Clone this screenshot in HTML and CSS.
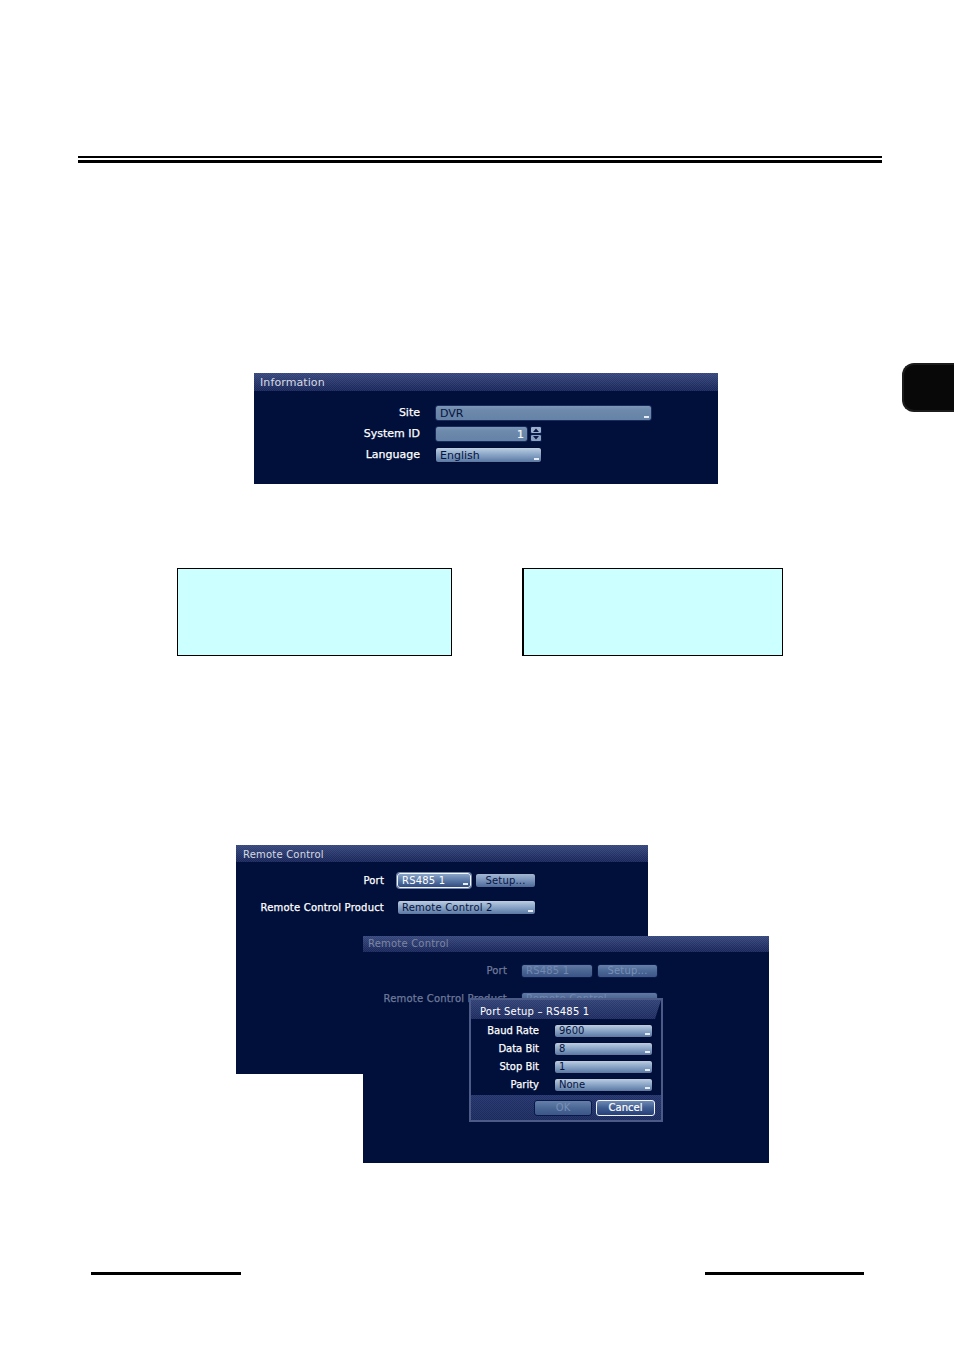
FILE: index.html
```html
<!DOCTYPE html>
<html lang="en">
<head>
<meta charset="utf-8">
<title>DVR Setup</title>
<link rel="stylesheet" href="styles.css">
</head>
<body>
<div class="page">
  <div class="rule"></div>
  <div class="tab"></div>

  <section class="osd info">
    <div class="osd-title">Information</div>
    <div class="info-body">
      <div class="lbl">Site</div>
      <div class="fld flat site"><span>DVR</span><i class="mark"></i></div>
      <div class="lbl">System ID</div>
      <div class="spin-row">
        <div class="fld flat sysid"><span class="num">1</span></div>
        <svg class="spin" width="12" height="16" viewBox="0 0 12 16">
          <rect x="0.5" y="0.5" width="11" height="7" rx="1.5" fill="#9cb2cc" stroke="#0a1a4a"/>
          <rect x="0.5" y="8.5" width="11" height="7" rx="1.5" fill="#8aa2c0" stroke="#0a1a4a"/>
          <path d="M3 6 L6 2.5 L9 6 Z" fill="#0b1746"/>
          <path d="M3 10 L6 13.5 L9 10 Z" fill="#0b1746"/>
        </svg>
      </div>
      <div class="lbl">Language</div>
      <div class="fld dd lang"><span>English</span><i class="mark"></i></div>
    </div>
  </section>

  <div class="boxes">
    <div class="cbox b1"></div>
    <div class="cbox b2"></div>
  </div>

  <div class="remote">
    <section class="osd rc1">
      <div class="osd-title small">Remote Control</div>
      <div class="rc-body">
        <div class="lbl">Port</div>
        <div class="pair">
          <div class="fld dd focus port"><span>RS485 1</span><i class="mark"></i></div>
          <div class="btn setup">Setup...</div>
        </div>
        <div class="lbl">Remote Control Product</div>
        <div class="fld dd prod"><span>Remote Control 2</span><i class="mark"></i></div>
      </div>
    </section>

    <section class="osd rc2">
      <div class="osd-title small dim">Remote Control</div>
      <div class="rc-body rc2-body">
        <div class="lbl dimlbl">Port</div>
        <div class="pair">
          <div class="fld dimfld port2"><span>RS485 1</span></div>
          <div class="btn dimbtn setup">Setup...</div>
        </div>
        <div class="lbl dimlbl">Remote Control Product</div>
        <div class="fld dimfld prod2"><span>Remote Control</span></div>
      </div>

      <div class="dialog">
        <div class="dlg-title">Port Setup – RS485 1</div>
        <div class="dlg-body">
          <div class="lbl">Baud Rate</div>
          <div class="fld dd dfld"><span>9600</span><i class="mark"></i></div>
          <div class="lbl">Data Bit</div>
          <div class="fld dd dfld"><span>8</span><i class="mark"></i></div>
          <div class="lbl">Stop Bit</div>
          <div class="fld dd dfld"><span>1</span><i class="mark"></i></div>
          <div class="lbl">Parity</div>
          <div class="fld dd dfld"><span>None</span><i class="mark"></i></div>
        </div>
        <div class="dlg-foot">
          <div class="btn dimbtn ok">OK</div>
          <div class="btn cancel">Cancel</div>
        </div>
      </div>
    </section>
  </div>

  <div class="footer">
    <div class="fline l1"></div>
    <div class="fline l2"></div>
  </div>
</div>
</body>
</html>
```

FILE: styles.css
```css
* { box-sizing: border-box; margin: 0; padding: 0; }

body {
  margin: 0;
  background: #ffffff;
  font-family: "DejaVu Sans", Verdana, sans-serif;
}

.page {
  position: relative;
  width: 954px;
  height: 1350px;
  overflow: hidden;
  padding-top: 156px;
}

.rule {
  margin-left: 78px;
  width: 804px;
  height: 7px;
  border-top: 2px solid #000;
  border-bottom: 3px solid #000;
}

.tab {
  position: absolute;
  left: 902px;
  top: 363px;
  width: 60px;
  height: 49px;
  background: #080808;
  border: 2px solid #1c1c1c;
  border-right: none;
  border-radius: 12px 0 0 12px;
}

/* ---------- OSD panels ---------- */
.osd {
  background: #010f3b;
  color: #ffffff;
}

.osd-title {
  height: 18px;
  padding: 1px 0 0 6px;
  font-size: 11px;
  line-height: 18px;
  color: #d6dae3;
  letter-spacing: 0.1px;
  background-image:
    repeating-conic-gradient(rgba(255,255,255,0.07) 0 25%, rgba(0,0,0,0) 0 50%),
    linear-gradient(#35467c, #1f2e62 70%, #16245a);
  background-size: 2px 2px, auto;
}

.osd-title.small {
  height: 17px;
  line-height: 17px;
  padding: 1px 0 0 7px;
  font-size: 10px;
  letter-spacing: 0.2px;
}

.osd-title.dim {
  height: 16px;
  line-height: 16px;
  padding: 0 0 0 5px;
  color: #7c86a2;
}

.lbl {
  text-align: right;
  white-space: nowrap;
  -webkit-text-stroke: 0.25px currentColor;
}

.fld {
  display: flex;
  justify-content: space-between;
  align-items: center;
  padding: 0 2px 0 4px;
  border-radius: 3px;
  color: #08143f;
  white-space: nowrap;
  overflow: hidden;
}

.mark {
  display: block;
  width: 5px;
  height: 2px;
  background: #e6ecf4;
  align-self: flex-end;
  margin-bottom: 2px;
  flex: none;
}

.flat {
  background: linear-gradient(#7c97b7, #6d89ab 30%, #6583a7);
  border: 1px solid #1a2a5a;
}

.dd {
  background: linear-gradient(#bccee2, #8ca7c8 45%, #5a78a3);
  border: 1px solid #040c34;
}

.focus {
  border: 1px solid #f2f6fb;
  box-shadow: 0 0 0 1px #6e84aa;
  color: #ffffff;
  background: linear-gradient(#8aa4c6, #5a78a6 50%, #304c82);
}

.btn {
  text-align: center;
  border-radius: 3px;
  border: 1px solid #050d36;
  background: linear-gradient(#a2b7d2, #7892ba 50%, #4d6a99);
  color: #0a1646;
  white-space: nowrap;
}

/* ---------- Information panel ---------- */
.info {
  margin: 210px 0 0 254px;
  width: 464px;
  height: 111px;
}

.info-body {
  display: grid;
  grid-template-columns: 166px max-content;
  column-gap: 15px;
  row-gap: 5px;
  padding-top: 14px;
  align-items: center;
  font-size: 11px;
}

.info-body .lbl { line-height: 16px; }

.info .fld { height: 16px; font-size: 11px; }

.site { width: 217px; }

.spin-row {
  display: flex;
  align-items: center;
  gap: 2px;
}

.sysid {
  width: 93px;
  justify-content: flex-end;
  padding-right: 3px;
}

.num { color: #f4f7fb; -webkit-text-stroke: 0.2px #f4f7fb; }

.spin { display: block; }

.lang { width: 107px; }

/* ---------- Cyan boxes ---------- */
.boxes {
  display: flex;
  gap: 70px;
  margin: 84px 0 0 177px;
}

.cbox {
  height: 88px;
  background: #ccffff;
  border: 1px solid #000;
}

.b1 { width: 275px; }
.b2 { width: 261px; border-left-width: 2px; }

/* ---------- Remote control group ---------- */
.remote {
  position: relative;
  margin: 189px 0 0 236px;
  width: 412px;
  height: 229px;
}

.rc1 {
  width: 412px;
  height: 229px;
}

.rc-body {
  display: grid;
  grid-template-columns: 148px max-content;
  column-gap: 13px;
  row-gap: 12px;
  padding-top: 11px;
  align-items: center;
  font-size: 10px;
  letter-spacing: 0.2px;
}

.rc-body .lbl { line-height: 15px; }
.rc-body .fld, .rc-body .btn { height: 15px; line-height: 13px; font-size: 10px; }

.pair {
  display: flex;
  gap: 4px;
}

.port { width: 74px; }
.setup { width: 61px; }
.prod { width: 139px; }

.rc2 {
  position: absolute;
  left: 127px;
  top: 91px;
  width: 406px;
  height: 227px;
}

.rc2-body {
  grid-template-columns: 144px max-content;
  column-gap: 14px;
  row-gap: 13px;
}

.rc2-body .fld, .rc2-body .btn { height: 14px; line-height: 12px; }

.dimlbl { color: #6d7999; }

.dimfld {
  background: linear-gradient(#6079a4, #4a6592 50%, #3a5586);
  border: 1px solid #0a1848;
  color: #7189b2;
}

.dimbtn {
  background: linear-gradient(#6580aa, #4b6795 50%, #3b5688);
  border: 1px solid #0a1848;
  color: #7890b6;
}

.port2 { width: 72px; }
.prod2 { width: 137px; }

/* ---------- Port setup dialog ---------- */
.dialog {
  position: absolute;
  left: 106px;
  top: 62px;
  width: 194px;
  height: 124px;
  background: #010f3b;
  border: 2px solid #4b5a86;
}

.dlg-title {
  height: 19px;
  padding: 2px 0 0 9px;
  font-size: 10px;
  line-height: 19px;
  color: #ffffff;
  letter-spacing: 0.2px;
  background-image:
    repeating-conic-gradient(rgba(255,255,255,0.07) 0 25%, rgba(0,0,0,0) 0 50%),
    linear-gradient(#2e3f74, #1b2a5e);
  background-size: 2px 2px, auto;
  clip-path: polygon(0 0, 100% 0, calc(100% - 6px) 100%, 0 100%);
}

.dlg-body {
  display: grid;
  grid-template-columns: 68px 99px;
  column-gap: 15px;
  row-gap: 4px;
  padding-top: 5px;
  align-items: center;
  font-size: 10px;
}

.dlg-body .lbl { line-height: 14px; }

.dfld {
  height: 14px;
  font-size: 10px;
  line-height: 12px;
}

.dlg-foot {
  margin-top: 3px;
  height: 25px;
  display: flex;
  justify-content: flex-end;
  align-items: center;
  gap: 4px;
  padding-right: 6px;
  background-image:
    repeating-conic-gradient(rgba(255,255,255,0.06) 0 25%, rgba(0,0,0,0) 0 50%),
    linear-gradient(#22326a, #1a2a5e);
  background-size: 2px 2px, auto;
}

.dlg-foot .btn {
  height: 16px;
  font-size: 10px;
  line-height: 14px;
}

.ok { width: 58px; }

.cancel {
  width: 59px;
  border: 1px solid #f2f6fb;
  color: #ffffff;
  -webkit-text-stroke: 0.2px #ffffff;
  background: linear-gradient(#6d89b4, #3f5c90 50%, #26407a);
}

/* ---------- Footer lines ---------- */
.footer {
  display: flex;
  justify-content: space-between;
  margin: 198px 0 0 91px;
  width: 773px;
}

.fline {
  height: 3px;
  background: #000;
}

.l1 { width: 150px; }
.l2 { width: 159px; }
```
